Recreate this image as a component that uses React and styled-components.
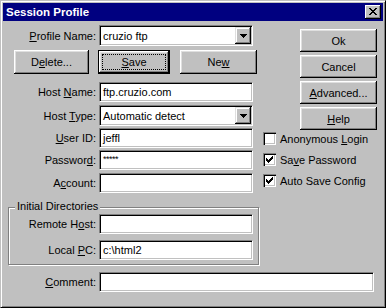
import styled, { createGlobalStyle } from "styled-components";

const GlobalStyle = createGlobalStyle`
  html, body {
    margin: 0;
    padding: 0;
    background: #c0c0c0;
  }
  body {
    font-family: "Liberation Sans", Arial, sans-serif;
    font-size: 11px;
    color: #000;
  }
`;

const Window = styled.div`
  width: 386px;
  height: 308px;
  box-sizing: border-box;
  background: #c0c0c0;
  border: 1px solid;
  border-color: #c0c0c0 #000 #000 #c0c0c0;
  box-shadow: inset 1px 1px #fff, inset -1px -1px #808080;
  padding: 2px;
  display: flex;
  flex-direction: column;
`;

const TitleBar = styled.div`
  height: 18px;
  flex: none;
  background: #000080;
  color: #fff;
  display: flex;
  align-items: center;
  padding-left: 3px;
  font-weight: bold;
  font-size: 11.5px;
`;

const CloseButton = styled.div`
  width: 16px;
  height: 14px;
  margin-left: auto;
  margin-right: 2px;
  background: #c0c0c0;
  box-shadow: inset -1px -1px #000, inset 1px 1px #fff, inset -2px -2px #808080;
  display: flex;
  align-items: center;
  justify-content: center;
  padding-bottom: 1px;
  box-sizing: border-box;
`;

const Body = styled.div`
  display: flex;
  flex: none;
`;

const LeftCol = styled.div`
  width: 256px;
  display: flex;
  flex-direction: column;
`;

const RightCol = styled.div`
  flex: 1;
  display: flex;
  flex-direction: column;
  padding: 8px 6px 0 4px;
`;

const Row = styled.div`
  display: grid;
  grid-template-columns: ${(p) => p.$label || 93}px ${(p) => p.$field || 154}px;
  column-gap: 3px;
  align-items: center;
  height: ${(p) => p.$h || 20}px;
  margin-top: ${(p) => p.$top || 0}px;
`;

const Label = styled.label`
  text-align: right;
  white-space: nowrap;
`;

const Field = styled.div`
  height: 100%;
  box-sizing: border-box;
  background: #fff;
  border: 1px solid;
  border-color: #808080 #fff #fff #808080;
  box-shadow: inset 1px 1px #000, inset -1px -1px #c0c0c0;
  padding: ${(p) => (p.$small ? "3px 3px 0" : "0 3px")};
  display: flex;
  align-items: ${(p) => (p.$small ? "flex-start" : "center")};
  white-space: nowrap;
  overflow: hidden;
  font-size: ${(p) => (p.$small ? "9px" : "11px")};
  letter-spacing: ${(p) => (p.$small ? "-0.5px" : "normal")};
`;

const Combo = styled(Field)`
  padding: 1px 1px 1px 3px;
  align-items: stretch;
`;

const ComboText = styled.span`
  flex: 1;
  display: flex;
  align-items: center;
`;

const DropButton = styled.div`
  width: 16px;
  background: #c0c0c0;
  box-shadow: inset -1px -1px #000, inset 1px 1px #dfdfdf, inset -2px -2px #808080,
    inset 2px 2px #fff;
  display: flex;
  align-items: center;
  justify-content: center;
`;

const ButtonRow = styled.div`
  display: flex;
  margin-top: 4px;
  padding-left: 11px;
  height: 24px;
`;

const Button = styled.div`
  width: ${(p) => p.$w || 77}px;
  height: ${(p) => p.$h || 23}px;
  margin-left: ${(p) => p.$gap || 0}px;
  box-sizing: border-box;
  flex: none;
  background: #c0c0c0;
  box-shadow: inset -1px -1px #000, inset 1px 1px #fff, inset -2px -2px #808080,
    inset 2px 2px #dfdfdf;
  display: flex;
  align-items: center;
  justify-content: center;
  white-space: nowrap;
`;

const DefaultButton = styled(Button)`
  border: 1px solid #000;
  padding: 3px;
`;

const FocusRing = styled.span`
  flex: 1;
  align-self: stretch;
  border: 1px dotted #000;
  display: flex;
  align-items: center;
  justify-content: center;
`;

const Stack = styled.div`
  display: flex;
  flex-direction: column;
  align-items: flex-end;
  gap: 3px;
`;

const Checks = styled.div`
  display: flex;
  flex-direction: column;
  gap: 8px;
  margin-top: 2px;
`;

const CheckRow = styled.div`
  display: flex;
  align-items: center;
  height: 13px;
  gap: 4px;
  white-space: nowrap;
`;

const Box = styled.div`
  width: 13px;
  height: 13px;
  flex: none;
  background: #fff;
  box-shadow: inset 1px 1px #808080, inset 2px 2px #000, inset -1px -1px #fff,
    inset -2px -2px #c0c0c0;
  display: flex;
  align-items: center;
  justify-content: center;
`;

const Group = styled.div`
  margin: 14px 0 0 5px;
  width: 251px;
  box-sizing: border-box;
  border: 1px solid #808080;
  box-shadow: inset 1px 1px #fff, 1px 1px #fff;
  padding: 0 0 4px 0;
  display: flex;
  flex-direction: column;
`;

const Legend = styled.span`
  align-self: flex-start;
  margin: -8px 0 0 6px;
  padding: 0 2px;
  height: 13px;
  line-height: 13px;
  background: #c0c0c0;
`;

const CommentRow = styled(Row)`
  margin-top: 7px;
`;

const Check = () => (
  <svg width="7" height="7" viewBox="0 0 7 7" shapeRendering="crispEdges">
    <path d="M6 0h1v1h-1z M5 1h2v1h-2z M0 2h1v1h-1z M4 2h3v1h-3z M0 3h2v1h-2z M3 3h3v1h-3z M0 4h5v1h-5z M1 5h3v1h-3z M2 6h1v1h-1z" fill="#000" />
  </svg>
);

const CloseGlyph = () => (
  <svg width="8" height="7" viewBox="0 0 8 7" shapeRendering="crispEdges">
    <path d="M0 0h2v1h-2z M6 0h2v1h-2z M1 1h2v1h-2z M5 1h2v1h-2z M2 2h4v1h-4z M3 3h2v1h-2z M2 4h4v1h-4z M1 5h2v1h-2z M5 5h2v1h-2z M0 6h2v1h-2z M6 6h2v1h-2z" fill="#000" />
  </svg>
);

const Arrow = () => (
  <svg width="7" height="4" viewBox="0 0 7 4" shapeRendering="crispEdges">
    <path d="M0 0h7v1h-7z M1 1h5v1h-5z M2 2h3v1h-3z M3 3h1v1h-1z" fill="#000" />
  </svg>
);

const CheckItem = ({ checked, children }) => (
  <CheckRow>
    <Box>{checked && <Check />}</Box>
    <span>{children}</span>
  </CheckRow>
);

export default function App() {
  return (
    <>
      <GlobalStyle />
      <Window>
        <TitleBar>
          Session Profile
          <CloseButton>
            <CloseGlyph />
          </CloseButton>
        </TitleBar>
        <Body>
          <LeftCol>
            <Row $top={4} $h={21}>
              <Label><u>P</u>rofile Name:</Label>
              <Combo>
                <ComboText>cruzio ftp</ComboText>
                <DropButton><Arrow /></DropButton>
              </Combo>
            </Row>
            <ButtonRow>
              <Button $w={75} $h={24}>D<u>e</u>lete...</Button>
              <DefaultButton $w={72} $h={24} $gap={9}>
                <FocusRing><u>S</u>ave</FocusRing>
              </DefaultButton>
              <Button $w={77} $h={24} $gap={10}>Ne<u>w</u></Button>
            </ButtonRow>
            <Row $top={8}>
              <Label>Host <u>N</u>ame:</Label>
              <Field>ftp.cruzio.com</Field>
            </Row>
            <Row $top={3} $h={21}>
              <Label>Host <u>T</u>ype:</Label>
              <Combo>
                <ComboText>Automatic detect</ComboText>
                <DropButton><Arrow /></DropButton>
              </Combo>
            </Row>
            <Row $top={2}>
              <Label><u>U</u>ser ID:</Label>
              <Field>jeffl</Field>
            </Row>
            <Row $top={2}>
              <Label>Passwor<u>d</u>:</Label>
              <Field $small>*****</Field>
            </Row>
            <Row $top={3}>
              <Label>A<u>c</u>count:</Label>
              <Field />
            </Row>
            <Group>
              <Legend>Initial Directories</Legend>
              <Row $label={87} $top={1}>
                <Label>Remote H<u>o</u>st:</Label>
                <Field />
              </Row>
              <Row $label={87} $top={6}>
                <Label>Local <u>P</u>C:</Label>
                <Field>c:\html2</Field>
              </Row>
            </Group>
          </LeftCol>
          <RightCol>
            <Stack>
              <Button>Ok</Button>
              <Button>Cancel</Button>
              <Button><u>A</u>dvanced...</Button>
              <Button><u>H</u>elp</Button>
            </Stack>
            <Checks>
              <CheckItem>Anonymous <u>L</u>ogin</CheckItem>
              <CheckItem checked>Sa<u>v</u>e Password</CheckItem>
              <CheckItem checked>Auto Save Config</CheckItem>
            </Checks>
          </RightCol>
        </Body>
        <CommentRow $field={275}>
          <Label><u>C</u>omment:</Label>
          <Field />
        </CommentRow>
      </Window>
    </>
  );
}
